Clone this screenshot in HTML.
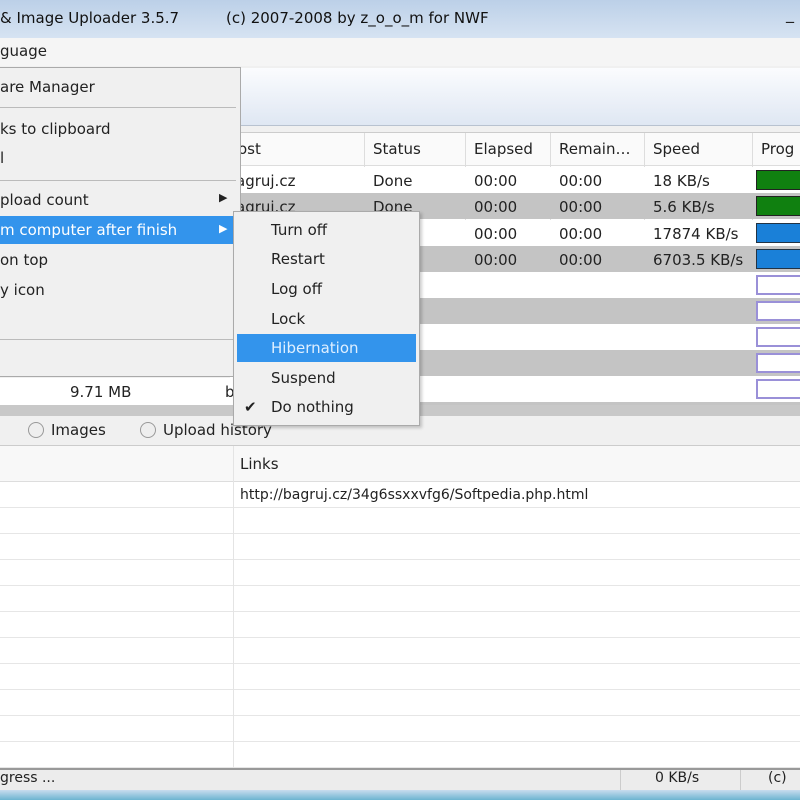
<!DOCTYPE html>
<html><head><style>
*{margin:0;padding:0;box-sizing:border-box}
body{width:800px;height:800px;overflow:hidden;position:relative;background:#f0f0f0;font-family:"DejaVu Sans","Liberation Sans",sans-serif;font-size:15px;color:#222}
.a{position:absolute;white-space:nowrap}
.row{position:absolute;left:233px;width:567px;height:26px}
</style></head><body>
<div class="a" style="left:0;top:0;width:800px;height:38px;background:linear-gradient(#bcd0e8,#d6e3f2)"></div>
<div class="a" style="left:0;top:9px;font-size:15px;color:#111">&amp; Image Uploader 3.5.7</div>
<div class="a" style="left:226px;top:9px;font-size:15px;color:#111">(c) 2007-2008 by z_o_o_m for NWF</div>
<div class="a" style="left:786px;top:4px;font-size:16px">_</div>
<div class="a" style="left:0;top:38px;width:800px;height:28px;background:#f5f5f5"></div>
<div class="a" style="left:0;top:42px">guage</div>
<div class="a" style="left:0;top:68px;width:800px;height:58px;background:linear-gradient(#fbfcfe,#dfe7f3);border-bottom:1px solid #b8c2d0"></div>
<div class="a" style="left:230px;top:132px;width:570px;height:284px;background:#fff;border-top:1px solid #ccc"></div>
<div class="a" style="left:230px;top:133px;width:570px;height:33px;background:#fafafa;border-bottom:1px solid #ddd"></div>
<div class="a" style="left:238px;top:140px">ost</div>
<div class="a" style="left:373px;top:140px">Status</div>
<div class="a" style="left:474px;top:140px">Elapsed</div>
<div class="a" style="left:559px;top:140px">Remain…</div>
<div class="a" style="left:653px;top:140px">Speed</div>
<div class="a" style="left:761px;top:140px">Prog</div>
<div class="a" style="left:364px;top:133px;width:1px;height:283px;background:#ddd"></div>
<div class="a" style="left:465px;top:133px;width:1px;height:283px;background:#ddd"></div>
<div class="a" style="left:550px;top:133px;width:1px;height:283px;background:#ddd"></div>
<div class="a" style="left:644px;top:133px;width:1px;height:283px;background:#ddd"></div>
<div class="a" style="left:752px;top:133px;width:1px;height:283px;background:#ddd"></div>
<div class="row" style="top:167px;background:#fff"></div>
<div class="row" style="top:193px;background:#c4c4c4"></div>
<div class="row" style="top:220px;background:#fff"></div>
<div class="row" style="top:246px;background:#c4c4c4"></div>
<div class="row" style="top:272px;background:#fff"></div>
<div class="row" style="top:298px;background:#c4c4c4"></div>
<div class="row" style="top:324px;background:#fff"></div>
<div class="row" style="top:350px;background:#c4c4c4"></div>
<div class="row" style="top:376px;background:#fff"></div>
<div class="row" style="top:402px;background:#c4c4c4;height:14px"></div>
<div class="a" style="left:236px;top:172px">agruj.cz</div><div class="a" style="left:373px;top:172px">Done</div>
<div class="a" style="left:236px;top:198px">agruj.cz</div><div class="a" style="left:373px;top:198px">Done</div>
<div class="a" style="left:474px;top:172px">00:00</div><div class="a" style="left:559px;top:172px">00:00</div><div class="a" style="left:653px;top:172px">18 KB/s</div>
<div class="a" style="left:474px;top:198px">00:00</div><div class="a" style="left:559px;top:198px">00:00</div><div class="a" style="left:653px;top:198px">5.6 KB/s</div>
<div class="a" style="left:474px;top:225px">00:00</div><div class="a" style="left:559px;top:225px">00:00</div><div class="a" style="left:653px;top:225px">17874 KB/s</div>
<div class="a" style="left:474px;top:251px">00:00</div><div class="a" style="left:559px;top:251px">00:00</div><div class="a" style="left:653px;top:251px">6703.5 KB/s</div>
<div class="a" style="left:756px;top:170px;width:50px;height:20px;background:#108010;border:1px solid #222"></div>
<div class="a" style="left:756px;top:196px;width:50px;height:20px;background:#108010;border:1px solid #222"></div>
<div class="a" style="left:756px;top:223px;width:50px;height:20px;background:#1a80d8;border:1px solid #234"></div>
<div class="a" style="left:756px;top:249px;width:50px;height:20px;background:#1a80d8;border:1px solid #234"></div>
<div class="a" style="left:756px;top:275px;width:50px;height:20px;background:#fff;border:2px solid #9a90d8"></div>
<div class="a" style="left:756px;top:301px;width:50px;height:20px;background:#fff;border:2px solid #9a90d8"></div>
<div class="a" style="left:756px;top:327px;width:50px;height:20px;background:#fff;border:2px solid #9a90d8"></div>
<div class="a" style="left:756px;top:353px;width:50px;height:20px;background:#fff;border:2px solid #9a90d8"></div>
<div class="a" style="left:756px;top:379px;width:50px;height:20px;background:#fff;border:2px solid #9a90d8"></div>
<div class="a" style="left:0;top:378px;width:233px;height:27px;background:#fff"></div>
<div class="a" style="left:70px;top:383px">9.71 MB</div>
<div class="a" style="left:225px;top:383px">b</div>
<div class="a" style="left:0;top:405px;width:800px;height:11px;background:#c8c8c8"></div>
<div class="a" style="left:28px;top:422px;width:16px;height:16px;border:1px solid #999;border-radius:50%;background:#eee"></div>
<div class="a" style="left:51px;top:421px">Images</div>
<div class="a" style="left:140px;top:422px;width:16px;height:16px;border:1px solid #999;border-radius:50%;background:#eee"></div>
<div class="a" style="left:163px;top:421px">Upload history</div>
<div class="a" style="left:0;top:445px;width:800px;height:324px;background:#fff;border-top:1px solid #ccc;background-image:repeating-linear-gradient(#fff 0 25px,#e6e6e6 25px 26px);background-position:0 36px"></div>
<div class="a" style="left:0;top:446px;width:800px;height:36px;background:#f8f8f8;border-bottom:1px solid #ddd"></div>
<div class="a" style="left:233px;top:446px;width:1px;height:323px;background:#e4e4e4"></div>
<div class="a" style="left:240px;top:455px">Links</div>
<div class="a" style="left:240px;top:487px;font-size:14px">http://bagruj.cz/34g6ssxxvfg6/Softpedia.php.html</div>
<div class="a" style="left:0;top:768px;width:800px;height:22px;background:#ececec;border-top:2px solid #999"></div>
<div class="a" style="left:0;top:770px;font-size:14px">gress ...</div>
<div class="a" style="left:620px;top:770px;width:1px;height:20px;background:#ccc"></div>
<div class="a" style="left:655px;top:770px;font-size:14px">0 KB/s</div>
<div class="a" style="left:740px;top:770px;width:1px;height:20px;background:#ccc"></div>
<div class="a" style="left:768px;top:770px;font-size:14px">(c)</div>
<div class="a" style="left:0;top:790px;width:800px;height:10px;background:linear-gradient(#c8dcee,#6cb4d0)"></div>
<div class="a" style="left:0;top:67px;width:241px;height:310px;background:#f0f0f0;border:1px solid #aaa;border-left:none"></div>
<div class="a" style="left:0;top:78px">are Manager</div>
<div class="a" style="left:0;top:107px;width:236px;height:1px;background:#bbb"></div>
<div class="a" style="left:0;top:120px">ks to clipboard</div>
<div class="a" style="left:0;top:149px">l</div>
<div class="a" style="left:0;top:180px;width:236px;height:1px;background:#bbb"></div>
<div class="a" style="left:0;top:191px">pload count</div>
<div class="a" style="left:219px;top:191px;font-size:11px">▶</div>
<div class="a" style="left:0;top:216px;width:233px;height:28px;background:#3394ec"></div>
<div class="a" style="left:0;top:221px;color:#fff">m computer after finish</div>
<div class="a" style="left:219px;top:222px;font-size:11px;color:#fff">▶</div>
<div class="a" style="left:0;top:251px">on top</div>
<div class="a" style="left:0;top:281px">y icon</div>
<div class="a" style="left:0;top:339px;width:236px;height:1px;background:#bbb"></div>
<div class="a" style="left:233px;top:211px;width:187px;height:215px;background:#f0f0f0;border:1px solid #aaa;box-shadow:2px 2px 3px rgba(0,0,0,.2)"></div>
<div class="a" style="left:271px;top:221px">Turn off</div>
<div class="a" style="left:271px;top:250px">Restart</div>
<div class="a" style="left:271px;top:280px">Log off</div>
<div class="a" style="left:271px;top:310px">Lock</div>
<div class="a" style="left:237px;top:334px;width:179px;height:28px;background:#3394ec"></div>
<div class="a" style="left:271px;top:339px;color:#dfefff">Hibernation</div>
<div class="a" style="left:271px;top:369px">Suspend</div>
<div class="a" style="left:244px;top:398px">✔</div>
<div class="a" style="left:271px;top:398px">Do nothing</div>
</body></html>
